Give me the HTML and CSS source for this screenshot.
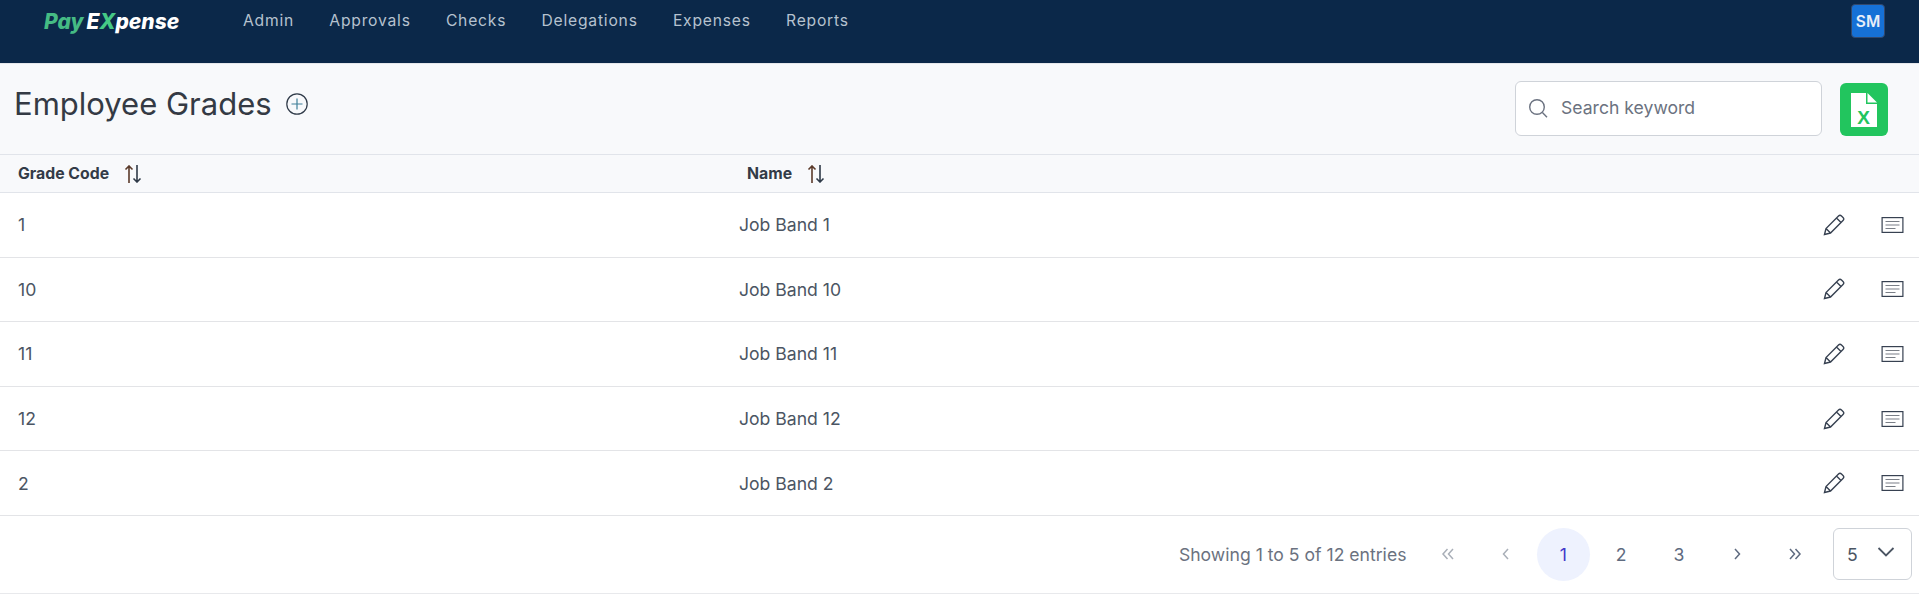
FILE: index.html
```html
<!DOCTYPE html>
<html lang="en">
<head>
<meta charset="utf-8">
<title>Employee Grades</title>
<link rel="stylesheet" href="styles.css">
</head>
<body>
<header class="topbar">
  <div class="logo"><span class="logo-green">Pay</span><span class="logo-e">E</span><span class="logo-x">X</span><span class="logo-rest">pense</span></div>
  <nav class="nav">
    <a>Admin</a><a>Approvals</a><a>Checks</a><a>Delegations</a><a>Expenses</a><a>Reports</a>
  </nav>
  <div class="avatar">SM</div>
</header>
<section class="titlebar">
  <div class="title-wrap">
    <h1>Employee Grades</h1>
    <svg class="plus" viewBox="0 0 22 22"><circle cx="11" cy="11" r="10.2" fill="none" stroke="#2f3a48" stroke-width="1.2"/><path d="M11 5.5v11M5.5 11h11" stroke="#3f7f98" stroke-width="1.2"/></svg>
  </div>
  <div class="tools">
    <div class="search">
      <svg class="search-icon" viewBox="0 0 20 20"><circle cx="9" cy="9" r="7.3" fill="none" stroke="#6b7280" stroke-width="1.4"/><path d="M14.4 14.4l4.6 4.8" stroke="#6b7280" stroke-width="1.4"/></svg>
      <span>Search keyword</span>
    </div>
    <div class="excel">
      <svg viewBox="0 0 26 34" class="excel-icon"><path d="M0 0h15v11h11v23H0z" fill="#fff"/><path d="M16.5 0L26 9.5h-9.500z" fill="#fff"/><text x="12.500" y="31" text-anchor="middle" class="excel-x">X</text></svg>
    </div>
  </div>
</section>
<div class="thead">
  <div class="col-code th">Grade Code <svg class="sort" viewBox="0 0 18 18"><path d="M5 18V1M1.500 4.500L5 1l3.500 3.500" fill="none" stroke="#5b3a2a" stroke-width="1.600"/><path d="M13 0v17M9.500 13.500L13 17l3.500-3.500" fill="none" stroke="#2f3a48" stroke-width="1.600"/></svg></div>
  <div class="col-name th">Name <svg class="sort" viewBox="0 0 18 18"><path d="M5 18V1M1.500 4.500L5 1l3.500 3.500" fill="none" stroke="#5b3a2a" stroke-width="1.600"/><path d="M13 0v17M9.500 13.500L13 17l3.500-3.500" fill="none" stroke="#2f3a48" stroke-width="1.600"/></svg></div>
</div>
<div class="row"><div class="col-code">1</div><div class="col-val">Job Band 1</div><div class="actions"><svg class="pencil" viewBox="0 0 22 22"><path d="M1.500 20.500l1.500-6L15.500 2c1-1 2-1 3 0l1.500 1.500c1 1 1 2 0 3L7.500 19zM3 14.500L7.500 19M13.500 4l4.500 4.500" fill="none" stroke="#374151" stroke-width="1.400"/></svg><svg class="note" viewBox="0 0 22 16"><rect x=".6" y=".6" width="20.800" height="14.800" fill="none" stroke="#374151" stroke-width="1.200"/><path d="M4 4.500h14M4 8h14M4 11.500h10" stroke="#7a7f87" stroke-width="1.200"/></svg></div></div>
<div class="row"><div class="col-code">10</div><div class="col-val">Job Band 10</div><div class="actions"><svg class="pencil" viewBox="0 0 22 22"><path d="M1.500 20.500l1.500-6L15.500 2c1-1 2-1 3 0l1.500 1.500c1 1 1 2 0 3L7.500 19zM3 14.500L7.500 19M13.500 4l4.500 4.500" fill="none" stroke="#374151" stroke-width="1.400"/></svg><svg class="note" viewBox="0 0 22 16"><rect x=".6" y=".6" width="20.800" height="14.800" fill="none" stroke="#374151" stroke-width="1.200"/><path d="M4 4.500h14M4 8h14M4 11.500h10" stroke="#7a7f87" stroke-width="1.200"/></svg></div></div>
<div class="row"><div class="col-code">11</div><div class="col-val">Job Band 11</div><div class="actions"><svg class="pencil" viewBox="0 0 22 22"><path d="M1.500 20.500l1.500-6L15.500 2c1-1 2-1 3 0l1.500 1.500c1 1 1 2 0 3L7.500 19zM3 14.500L7.500 19M13.500 4l4.500 4.500" fill="none" stroke="#374151" stroke-width="1.400"/></svg><svg class="note" viewBox="0 0 22 16"><rect x=".6" y=".6" width="20.800" height="14.800" fill="none" stroke="#374151" stroke-width="1.200"/><path d="M4 4.500h14M4 8h14M4 11.500h10" stroke="#7a7f87" stroke-width="1.200"/></svg></div></div>
<div class="row"><div class="col-code">12</div><div class="col-val">Job Band 12</div><div class="actions"><svg class="pencil" viewBox="0 0 22 22"><path d="M1.500 20.500l1.500-6L15.500 2c1-1 2-1 3 0l1.500 1.500c1 1 1 2 0 3L7.500 19zM3 14.500L7.500 19M13.500 4l4.500 4.500" fill="none" stroke="#374151" stroke-width="1.400"/></svg><svg class="note" viewBox="0 0 22 16"><rect x=".6" y=".6" width="20.800" height="14.800" fill="none" stroke="#374151" stroke-width="1.200"/><path d="M4 4.500h14M4 8h14M4 11.500h10" stroke="#7a7f87" stroke-width="1.200"/></svg></div></div>
<div class="row"><div class="col-code">2</div><div class="col-val">Job Band 2</div><div class="actions"><svg class="pencil" viewBox="0 0 22 22"><path d="M1.500 20.500l1.500-6L15.500 2c1-1 2-1 3 0l1.500 1.500c1 1 1 2 0 3L7.500 19zM3 14.500L7.500 19M13.500 4l4.500 4.500" fill="none" stroke="#374151" stroke-width="1.400"/></svg><svg class="note" viewBox="0 0 22 16"><rect x=".6" y=".6" width="20.800" height="14.800" fill="none" stroke="#374151" stroke-width="1.200"/><path d="M4 4.500h14M4 8h14M4 11.500h10" stroke="#7a7f87" stroke-width="1.200"/></svg></div></div>
<footer class="pager">
  <span class="entries">Showing 1 to 5 of 12 entries</span>
  <div class="pages">
    <a class="pg dim"><svg class="chev" viewBox="0 0 16 16"><path d="M7.500 3L3 8l4.500 5M13 3L8.500 8l4.500 5"/></svg></a>
    <a class="pg dim"><svg class="chev" viewBox="0 0 16 16"><path d="M10 3L5.500 8l4.500 5"/></svg></a>
    <a class="pg current">1</a>
    <a class="pg">2</a>
    <a class="pg">3</a>
    <a class="pg"><svg class="chev" viewBox="0 0 16 16"><path d="M6 3l4.500 5L6 13"/></svg></a>
    <a class="pg"><svg class="chev" viewBox="0 0 16 16"><path d="M3 3l4.500 5L3 13M8.500 3L13 8l-4.500 5"/></svg></a>
  </div>
  <div class="size"><span>5</span><svg class="size-chev" viewBox="0 0 18 10"><path d="M1.500 1L9 8.500 16.500 1"/></svg></div>
</footer>
</body>
</html>
```
FILE: styles.css
```css
* { box-sizing: border-box; }
html, body { margin: 0; padding: 0; }
body { width: 1919px; height: 612px; overflow: hidden; background: #fff; font-family: Inter, "Liberation Sans", sans-serif; color: #374151; }

.topbar { height: 64px; background: #0b2849; border-bottom: 1px solid #e5e7eb; display: flex; align-items: flex-start; position: relative; padding-left: 44px; }
.logo { width: 199px; margin-top: 9px; font-family: Inter, sans-serif; font-weight: 800; font-style: italic; font-size: 21px; line-height: 26px; white-space: nowrap; color: #fff; }
.logo-green { color: #45bb84; margin-right: 3px; }
.logo-x { color: #45c985; }
.nav { display: flex; gap: 35.200px; margin-top: 11px; }
.nav a { font-size: 15.650px; line-height: 20px; letter-spacing: .8px; color: #b6c2cf; }
.avatar { position: absolute; left: 1851px; top: 4px; width: 34px; height: 34px; border-radius: 4px; background: #1671d6; border: 1px solid #33486a; color: #e8eef8; font-weight: 600; font-size: 15.500px; display: flex; align-items: center; justify-content: center; }

.titlebar { height: 91px; background: #f8f9fb; display: flex; justify-content: space-between; align-items: flex-start; padding: 17px 31px 0 14px; border-bottom: 1px solid #e1e4ea; }
.title-wrap { display: flex; align-items: center; gap: 14px; margin-top: 3px; height: 40px; }
h1 { margin: 0; font-weight: 400; font-size: 31px; line-height: 40px; color: #343a44; }
.plus { width: 22px; height: 22px; }
.tools { display: flex; gap: 18px; }
.search { width: 307px; height: 55px; background: #fff; border: 1px solid #cfd3d9; border-radius: 6px; display: flex; align-items: center; padding: 0 0 2px 12px; gap: 13px; font-size: 17.600px; color: #6b7280; }
.search-icon { width: 20px; height: 20px; }
.excel { width: 48px; height: 53px; margin-top: 2px; background: #22c55e; border-radius: 6px; display: flex; align-items: center; justify-content: center; }
.excel-icon { width: 26px; height: 34px; }
.excel-x { font-family: "Liberation Sans", sans-serif; font-size: 19px; font-weight: 700; fill: #22c55e; }

.thead { height: 38px; background: #f8f9fb; border-bottom: 1px solid #e1e4ea; display: flex; align-items: center; font-size: 15.800px; font-weight: 700; }
.th { display: flex; align-items: center; color: #333b47; }
.thead .col-code { width: 747px; padding-left: 18px; }
.col-name { padding-left: 0; }
.sort { width: 18px; height: 18px; margin-left: 15px; }

.row { height: 64.600px; border-bottom: 1px solid #e3e4e7; display: flex; align-items: center; font-size: 17.600px; color: #4b5563; }
.row .col-code { width: 739px; padding-left: 18px; }
.col-val { flex: 1; }
.actions { display: flex; align-items: center; gap: 36px; padding-right: 15px; }
.pencil { width: 22px; height: 22px; }
.note { width: 23px; height: 16px; }

.pager { height: 78px; border-bottom: 1px solid #e8e9ec; display: flex; align-items: center; justify-content: flex-end; padding-right: 7px; font-size: 17.600px; color: #6b7280; }
.entries { margin-right: 12px; }
.pages { display: flex; }
.pg { width: 53px; height: 53px; margin: 0 2px 0 2.800px; border-radius: 50%; display: flex; align-items: center; justify-content: center; color: #5f6b80; }
.pg.dim { color: #a9afb8; }
.pg.current { background: #eef2fe; color: #4338ca; }
.chev { width: 16px; height: 16px; fill: none; stroke: currentColor; stroke-width: 1.500; }
.size { width: 79px; height: 52px; margin-left: 10px; border: 1px solid #cfd3d9; border-radius: 6px; display: flex; align-items: center; justify-content: space-between; padding: 0 16px 0 13px; color: #4b5563; }
.size-chev { width: 18px; height: 10px; fill: none; stroke: #4b5563; stroke-width: 1.800; margin-bottom: 4px; }
```
